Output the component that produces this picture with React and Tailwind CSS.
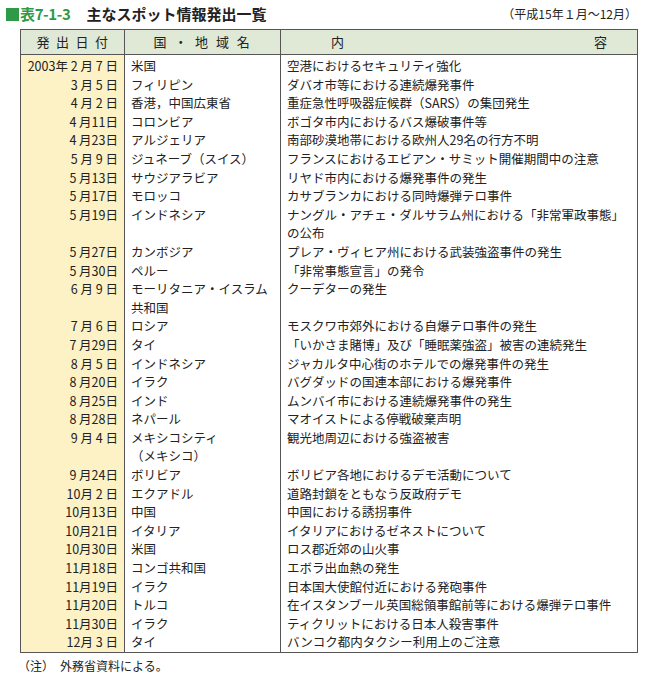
const ROWS = [
  ['2003年 2 月 7 日', '米国', '空港におけるセキュリティ強化'],
  ['3 月 5 日', 'フィリピン', 'ダバオ市等における連続爆発事件'],
  ['4 月 2 日', '香港，中国広東省', '重症急性呼吸器症候群（SARS）の集団発生'],
  ['4 月11日', 'コロンビア', 'ボゴタ市内におけるバス爆破事件等'],
  ['4 月23日', 'アルジェリア', '南部砂漠地帯における欧州人29名の行方不明'],
  ['5 月 9 日', 'ジュネーブ（スイス）', 'フランスにおけるエビアン・サミット開催期間中の注意'],
  ['5 月13日', 'サウジアラビア', 'リヤド市内における爆発事件の発生'],
  ['5 月17日', 'モロッコ', 'カサブランカにおける同時爆弾テロ事件'],
  ['5 月19日', 'インドネシア', ['ナングル・アチェ・ダルサラム州における「非常軍政事態」', 'の公布']],
  ['5 月27日', 'カンボジア', 'プレア・ヴィヒア州における武装強盗事件の発生'],
  ['5 月30日', 'ペルー', '「非常事態宣言」の発令'],
  ['6 月 9 日', ['モーリタニア・イスラム', '共和国'], 'クーデターの発生'],
  ['7 月 6 日', 'ロシア', 'モスクワ市郊外における自爆テロ事件の発生'],
  ['7 月29日', 'タイ', '「いかさま賭博」及び「睡眠薬強盗」被害の連続発生'],
  ['8 月 5 日', 'インドネシア', 'ジャカルタ中心街のホテルでの爆発事件の発生'],
  ['8 月20日', 'イラク', 'バグダッドの国連本部における爆発事件'],
  ['8 月25日', 'インド', 'ムンバイ市における連続爆発事件の発生'],
  ['8 月28日', 'ネパール', 'マオイストによる停戦破棄声明'],
  ['9 月 4 日', ['メキシコシティ', '（メキシコ）'], '観光地周辺における強盗被害'],
  ['9 月24日', 'ボリビア', 'ボリビア各地におけるデモ活動について'],
  ['10月 2 日', 'エクアドル', '道路封鎖をともなう反政府デモ'],
  ['10月13日', '中国', '中国における誘拐事件'],
  ['10月21日', 'イタリア', 'イタリアにおけるゼネストについて'],
  ['10月30日', '米国', 'ロス郡近郊の山火事'],
  ['11月18日', 'コンゴ共和国', 'エボラ出血熱の発生'],
  ['11月19日', 'イラク', '日本国大使館付近における発砲事件'],
  ['11月20日', 'トルコ', '在イスタンブール英国総領事館前等における爆弾テロ事件'],
  ['11月30日', 'イラク', 'ティクリットにおける日本人殺害事件'],
  ['12月 3 日', 'タイ', 'バンコク都内タクシー利用上のご注意'],
];

const Cell = ({ v }) =>
  Array.isArray(v) ? v.map((l, i) => <div key={i}>{l}</div>) : <div>{v}</div>;

const lines = r => Math.max(...r.map(c => (Array.isArray(c) ? c.length : 1)));

export default function App() {
  return (
    <div className="w-[647px] h-[682px] bg-white text-[12.5px] text-[#222] leading-[18.6px]" style={{ fontFamily: '"Noto Sans CJK JP", "Noto Sans", sans-serif' }}>
      <div className="flex items-center justify-between pl-[6px] pr-[10px] pt-[3px] h-[25px]">
        <div className="flex items-center text-[15px] font-bold">
          <span className="w-[13px] h-[13px] bg-[#2e9a48] mr-[1px]" />
          <span className="text-[#2e9a48] tracking-tight">表7-1-3</span>
          <span className="ml-[16px] text-[#222]">主なスポット情報発出一覧</span>
        </div>
        <div className="text-[12px]">（平成15年１月〜12月）</div>
      </div>
      <div className="ml-[20px] mt-[4px] w-[618px] border border-[#555]">
        <div className="flex h-[25px] bg-[#dfe9d6] border-b border-[#555] text-[13px] items-center">
          <div className="w-[104px] h-full flex items-center justify-center border-r border-[#555] tracking-[0.5em] pl-[6px]">発出日付</div>
          <div className="w-[156px] h-full flex items-center justify-center border-r border-[#555] tracking-[0.6em] pl-[6px]">国・地域名</div>
          <div className="flex-1 flex justify-between px-[50px] pr-[30px]"><span>内</span><span>容</span></div>
        </div>
        <div className="flex">
          <div className="w-[104px] bg-[#fdf1c6] border-r border-[#555] pt-[2px] pr-[6px] text-right">
            {ROWS.map((r, i) => (
              <div key={i} style={{ height: 18.6 * lines(r) }}>{r[0]}</div>
            ))}
          </div>
          <div className="w-[156px] border-r border-[#555] pt-[2px] pl-[6px]">
            {ROWS.map((r, i) => (
              <div key={i} style={{ height: 18.6 * lines(r) }}><Cell v={r[1]} /></div>
            ))}
          </div>
          <div className="flex-1 pt-[2px] pl-[6px]">
            {ROWS.map((r, i) => (
              <div key={i} style={{ height: 18.6 * lines(r) }}><Cell v={r[2]} /></div>
            ))}
          </div>
        </div>
      </div>
      <div className="ml-[18px] mt-[4px] text-[12px]">（注）　外務省資料による。</div>
    </div>
  );
}
